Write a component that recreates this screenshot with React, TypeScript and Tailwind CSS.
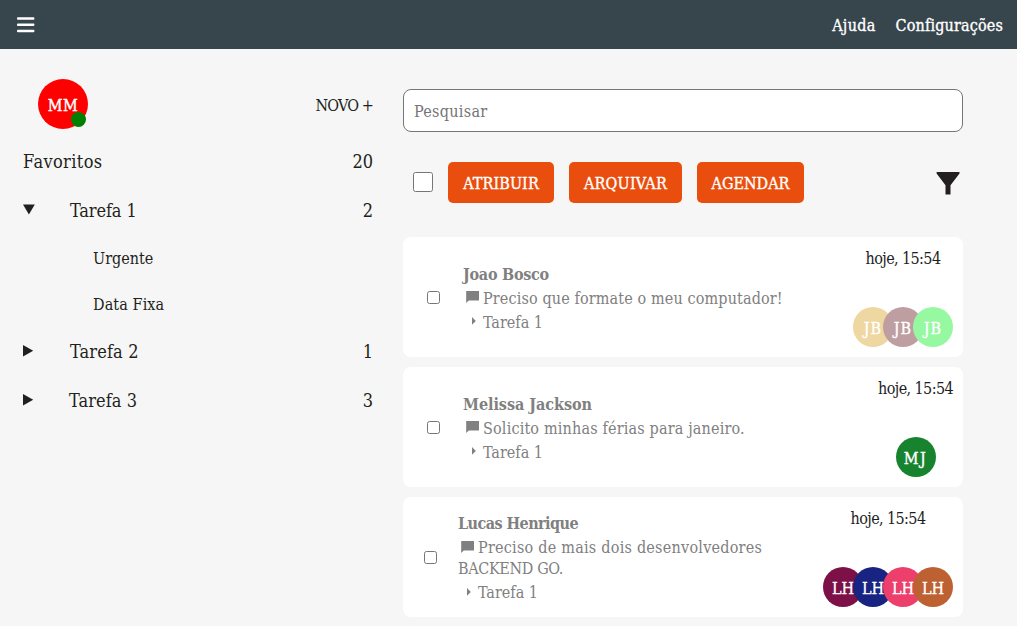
import type { ReactNode } from 'react';

type Folder = { label: string; count: number; open?: boolean; labelClass: string; children?: { label: string; tracking: string }[] };

type Person = { initials: string; color: string; tracking: string };

type Task = {
  name: string;
  nameClass: string;
  lines: { text: string; tracking: string }[];
  inset: string;
  people: Person[];
};

const folders: Folder[] = [
  {
    label: 'Tarefa 1',
    count: 2,
    open: true,
    labelClass: 'ml-[35px] tracking-[-0.1px]',
    children: [
      { label: 'Urgente', tracking: 'tracking-normal' },
      { label: 'Data Fixa', tracking: 'tracking-[0.1px]' },
    ],
  },
  { label: 'Tarefa 2', count: 1, labelClass: 'ml-[35px] tracking-[0.15px]' },
  { label: 'Tarefa 3', count: 3, labelClass: 'ml-[34px] tracking-[0.1px]' },
];

const tasks: Task[] = [
  {
    name: 'Joao Bosco',
    nameClass: 'tracking-[-0.27px]',
    lines: [{ text: 'Preciso que formate o meu computador!', tracking: 'tracking-[0.13px]' }],
    inset: 'pl-6 gap-[23px]',
    people: [
      { initials: 'JB', color: 'bg-[#eed7a1]', tracking: 'tracking-[1px]' },
      { initials: 'JB', color: 'bg-[#bf9ea2]', tracking: 'tracking-[1px]' },
      { initials: 'JB', color: 'bg-[#96f9a2]', tracking: 'tracking-[1px]' },
    ],
  },
  {
    name: 'Melissa Jackson',
    nameClass: 'tracking-[-0.04px]',
    lines: [{ text: 'Solicito minhas férias para janeiro.', tracking: 'tracking-[0.17px]' }],
    inset: 'pl-6 gap-[23px]',
    people: [{ initials: 'MJ', color: 'bg-[#18832f]', tracking: 'tracking-[1.5px]' }],
  },
  {
    name: 'Lucas Henrique',
    nameClass: 'tracking-[-0.55px]',
    lines: [
      { text: 'Preciso de mais dois desenvolvedores', tracking: 'tracking-[0.24px]' },
      { text: 'BACKEND GO.', tracking: 'tracking-[-0.35px]' },
    ],
    inset: 'pl-[21px] gap-[21px]',
    people: [
      { initials: 'LH', color: 'bg-[#7c1047]', tracking: 'tracking-normal' },
      { initials: 'LH', color: 'bg-[#182382]', tracking: 'tracking-normal' },
      { initials: 'LH', color: 'bg-[#ec3f6c]', tracking: 'tracking-normal' },
      { initials: 'LH', color: 'bg-[#bd6133]', tracking: 'tracking-normal' },
    ],
  },
];

function MenuIcon() {
  return (
    <svg width="18" height="16" viewBox="0 0 18 16" fill="#fff" aria-hidden="true">
      <rect x="0" y="0.2" width="17.4" height="2.5" rx="0.9" />
      <rect x="0" y="6.4" width="17.4" height="2.5" rx="0.9" />
      <rect x="0" y="12.7" width="17.4" height="2.5" rx="0.9" />
    </svg>
  );
}

function Arrow({ open }: { open?: boolean }) {
  return (
    <svg className="mb-px" width="12" height="12" viewBox="0 0 12 12" fill="#231f20" aria-hidden="true">
      <path d={open ? 'M0 .5h11.8L5.9 10.5z' : 'M0 0 10.2 5.8 0 11.6z'} />
    </svg>
  );
}

function FilterIcon() {
  return (
    <svg width="24" height="24" viewBox="0 0 24 24" fill="#231f20" aria-hidden="true">
      <path d="M.6 0h22.9v1.5L14.5 13.3V22.6H9.5V13.3L.6 1.5z" />
    </svg>
  );
}

function Button({ children, className }: { children: ReactNode; className: string }) {
  return (
    <button
      type="button"
      className={`h-[41px] rounded-[5px] bg-[#ea4e0f] pt-0.5 text-center text-base whitespace-nowrap text-white [-webkit-text-stroke:0.35px_white] ${className}`}
    >
      {children}
    </button>
  );
}

function TaskCard({ task }: { task: Task }) {
  return (
    <article className="flex h-[120px] rounded-lg bg-white pr-2.5">
      <div className={`flex min-w-0 flex-1 items-center ${task.inset}`}>
        <input type="checkbox" className="size-[13px] shrink-0" />
        <div className="pt-[3px] whitespace-nowrap text-[#808080]">
          <div className={`h-6 leading-6 font-bold ${task.nameClass}`}>{task.name}</div>
          <div className="flex h-6 items-center leading-6">
            <svg className="mr-1 mb-[3px] ml-[3px]" width="13" height="12" viewBox="0 0 13 12" fill="#808080" aria-hidden="true">
              <path d="M.2 0H13V9.6H2.8L.2 12z" />
            </svg>
            <span className={task.lines[0].tracking}>{task.lines[0].text}</span>
          </div>
          {task.lines.slice(1).map((line) => (
            <div key={line.text} className={`mb-[3px] h-[18px] leading-[18px] ${line.tracking}`}>
              {line.text}
            </div>
          ))}
          <div className="flex h-6 items-center leading-6">
            <svg className="mr-[7px] mb-[3px] ml-[9px]" width="4" height="8" viewBox="0 0 4 8" fill="#808080" aria-hidden="true">
              <path d="M0 0 3.8 3.9 0 7.8z" />
            </svg>
            <span>Tarefa 1</span>
          </div>
        </div>
      </div>
      <div className="flex flex-col items-center justify-between pt-2.5 pb-2.5">
        <time className="h-6 leading-6 tracking-[-0.6px] whitespace-nowrap text-[#1e1e1e]">hoje, 15:54</time>
        <div className="flex">
          {task.people.map((p, i) => (
            <span
              key={i}
              className={`flex size-10 items-center justify-center rounded-full pt-[3px] text-white [-webkit-text-stroke:0.35px_white] ${p.color} ${p.tracking} ${i > 0 ? '-ml-2.5' : ''}`}
            >
              {p.initials}
            </span>
          ))}
        </div>
      </div>
    </article>
  );
}

export default function App() {
  return (
    <div className="min-h-[626px] bg-[#f6f6f6] font-['DejaVu_Serif_Condensed','DejaVu_Serif',serif] text-base text-[#231f20]">
      <header className="flex h-[49px] items-center justify-between bg-[#37454c] pr-3.5 pl-[17px] text-white">
        <button type="button" aria-label="Menu">
          <MenuIcon />
        </button>
        <nav className="flex gap-5 pt-0.5 [-webkit-text-stroke:0.35px_white]">
          <a className="tracking-[0.3px]">Ajuda</a>
          <a className="tracking-[0.15px]">Configurações</a>
        </nav>
      </header>

      <div className="flex">
        <aside className="w-[403px] pt-[30px] pr-[30px] pl-[23px]">
          <div className="flex h-[58px] items-start justify-between pl-[15px]">
            <div className="relative flex size-[50px] items-center justify-center rounded-full bg-[#ff0000] pt-[3px] tracking-[0.5px] text-white [-webkit-text-stroke:0.4px_white]">
              MM
              <span className="absolute right-0.5 bottom-0.5 size-[15px] rounded-full bg-[#008000]" />
            </div>
            <button type="button" className="mt-[15px] h-6 leading-6 tracking-[-0.87px]">
              NOVO +
            </button>
          </div>

          <div className="flex h-[49px] items-center justify-between text-lg">
            <span className="tracking-[0.39px]">Favoritos</span>
            <span>20</span>
          </div>

          {folders.map((folder) => (
            <div key={folder.label}>
              <div className="flex h-[49px] items-center text-lg">
                <Arrow open={folder.open} />
                <span className={`flex-1 ${folder.labelClass}`}>{folder.label}</span>
                <span>{folder.count}</span>
              </div>
              {folder.children?.map((child) => (
                <div key={child.label} className={`flex h-[46px] items-center pt-0.5 pl-[70px] ${child.tracking}`}>
                  {child.label}
                </div>
              ))}
            </div>
          ))}
        </aside>

        <main className="w-[560px] pt-10">
          <input
            type="text"
            placeholder="Pesquisar"
            className="block h-[43px] w-full rounded-lg border border-[#767676] bg-white px-2.5 pt-0.5 tracking-[0.3px] placeholder:text-[#757575]"
          />

          <div className="mt-[30px] flex h-[41px] items-center pr-[3px] pl-2.5">
            <input type="checkbox" className="mb-px size-5" />
            <div className="ml-[15px] flex gap-[15px]">
              <Button className="w-[106px] tracking-[0.1px]">ATRIBUIR</Button>
              <Button className="w-[113px] tracking-[0.2px]">ARQUIVAR</Button>
              <Button className="w-[107px] tracking-normal">AGENDAR</Button>
            </div>
            <div className="mt-[3px] ml-auto">
              <FilterIcon />
            </div>
          </div>

          <div className="mt-[34px] flex flex-col gap-2.5">
            {tasks.map((task) => (
              <TaskCard key={task.name} task={task} />
            ))}
          </div>
        </main>
      </div>
    </div>
  );
}
